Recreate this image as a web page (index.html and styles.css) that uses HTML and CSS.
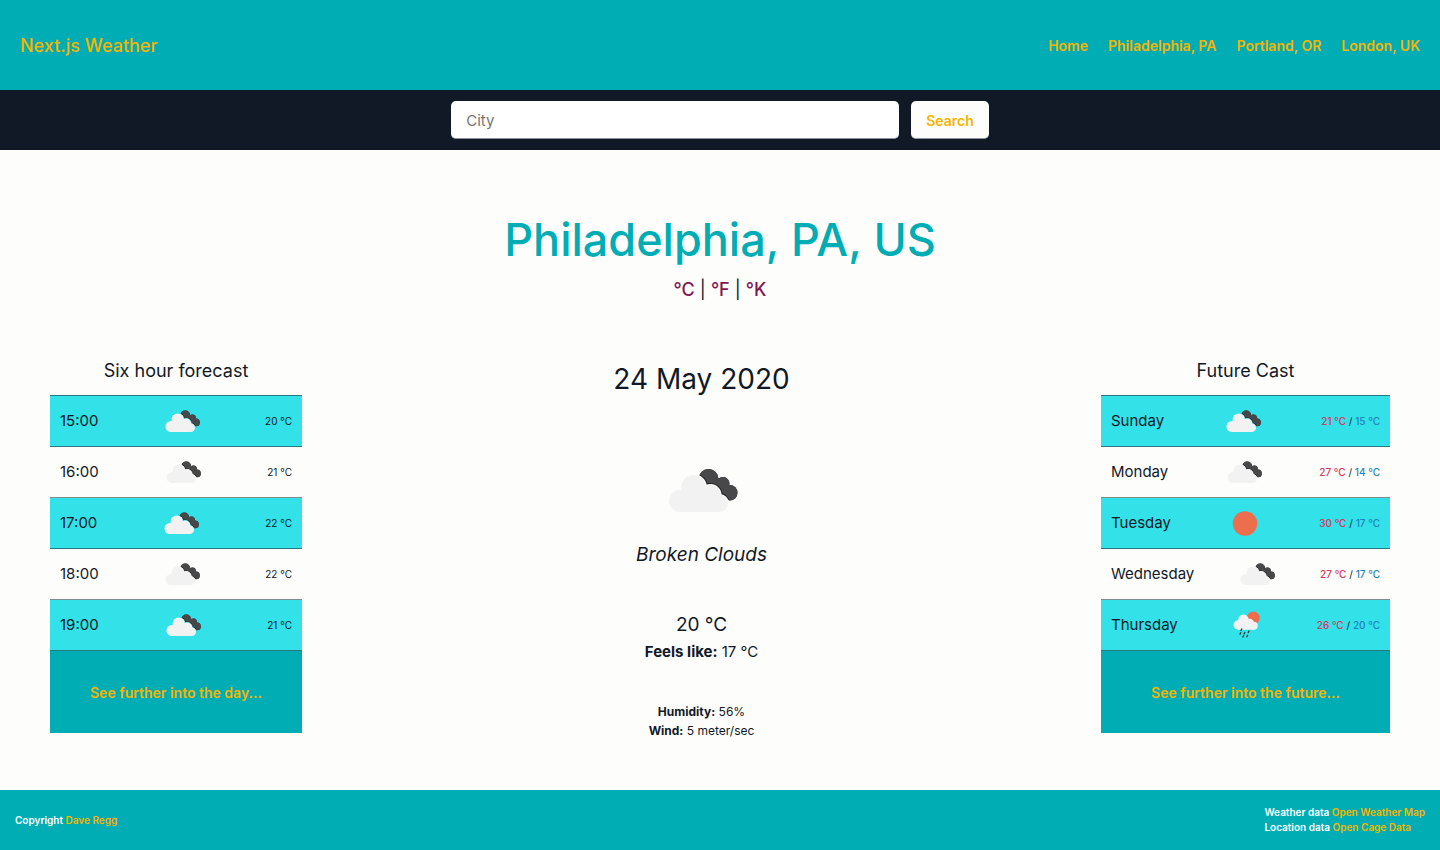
FILE: index.html
```html
<!DOCTYPE html>
<html lang="en">
<head>
<meta charset="utf-8">
<meta name="viewport" content="width=device-width, initial-scale=1">
<title>Next.js Weather</title>
<link rel="stylesheet" href="styles.css">
</head>
<body>
<svg class="sprite" aria-hidden="true">
  <defs>
    <g id="cloud-shape">
      <circle cx="28" cy="61" r="11"/><circle cx="41.5" cy="47.5" r="12.5"/><circle cx="58.5" cy="55" r="10"/><circle cx="67.5" cy="63.5" r="8.5"/><path d="M28 61V72H67.5V60L45 48Z"/>
    </g>
    <g id="back-clouds">
      <circle cx="56.5" cy="39" r="10"/><circle cx="71" cy="43.5" r="6.5"/><circle cx="77.8" cy="52.8" r="7.7"/><path d="M56 40L67 38L78 49L73 59L56 49Z"/>
    </g>
    <mask id="gap" maskUnits="userSpaceOnUse" x="0" y="0" width="100" height="100">
      <rect width="100" height="100" fill="#fff"/><use href="#cloud-shape" fill="#000" stroke="#000" stroke-width="2"/>
    </mask>
    <mask id="shade" maskUnits="userSpaceOnUse" x="0" y="0" width="100" height="100">
      <rect width="100" height="100" fill="#fff"/><use href="#cloud-shape" fill="#000" stroke="#000" stroke-width="4"/>
    </mask>
    <symbol id="broken-clouds" viewBox="0 0 100 100">
      <g mask="url(#gap)"><use href="#back-clouds" fill="#242424"/></g>
      <g mask="url(#shade)"><use href="#back-clouds" fill="#484749"/></g>
      <use href="#cloud-shape" fill="#f2f2f2"/>
    </symbol>
    <symbol id="clear" viewBox="0 0 100 100"><circle cx="50" cy="51" r="24.5" fill="#ec6e4c"/></symbol>
    <symbol id="rain" viewBox="0 0 100 100">
      <circle cx="62.500" cy="36" r="13" fill="#ec6e4c"/>
      <g fill="#f2f2f2"><circle cx="32.5" cy="50" r="9.5"/><circle cx="43" cy="39.5" r="10.5"/><circle cx="55.5" cy="46" r="8.5"/><circle cx="63.5" cy="51.5" r="8"/><path d="M32.5 48V59.5H63.5V47L44 40Z"/></g>
      <path d="M39.5 58l-1.5 3M37.5 65.5l-1.500 3M45.700 65l-1.500 3M54 62l-1.500 3M43.200 71l-1.500 3M51.200 70.500l-1.500 3" stroke="#333" stroke-width="2.600" stroke-linecap="round"/>
    </symbol>
  </defs>
</svg>

<header class="header">
  <a class="logo" href="#">Next.js Weather</a>
  <nav class="nav">
    <a href="#">Home</a>
    <a href="#">Philadelphia, PA</a>
    <a href="#">Portland, OR</a>
    <a href="#">London, UK</a>
  </nav>
</header>

<form class="search">
  <input class="search-input" type="text" placeholder="City" aria-label="City">
  <button class="search-button" type="button">Search</button>
</form>

<main class="main">
  <h1 class="city">Philadelphia, PA, US</h1>
  <p class="units"><a href="#">°C</a> | <a href="#">°F</a> | <a href="#">°K</a></p>

  <div class="columns">
    <section class="panel hourly">
      <h2 class="panel-title">Six hour forecast</h2>
      <ul class="rows">
        <li class="row"><span>15:00</span><svg class="icon"><use href="#broken-clouds"/></svg><span class="temp">20 °C</span></li>
        <li class="row"><span>16:00</span><svg class="icon"><use href="#broken-clouds"/></svg><span class="temp">21 °C</span></li>
        <li class="row"><span>17:00</span><svg class="icon"><use href="#broken-clouds"/></svg><span class="temp">22 °C</span></li>
        <li class="row"><span>18:00</span><svg class="icon"><use href="#broken-clouds"/></svg><span class="temp">22 °C</span></li>
        <li class="row"><span>19:00</span><svg class="icon"><use href="#broken-clouds"/></svg><span class="temp">21 °C</span></li>
      </ul>
      <button class="more" type="button">See further into the day...</button>
    </section>

    <section class="current">
      <h2 class="date">24 May 2020</h2>
      <svg class="icon-large"><use href="#broken-clouds"/></svg>
      <p class="condition">Broken Clouds</p>
      <p class="now">20 °C</p>
      <p class="feels"><strong>Feels like:</strong> 17 °C</p>
      <div class="details">
        <p><strong>Humidity:</strong> 56%</p>
        <p><strong>Wind:</strong> 5 meter/sec</p>
      </div>
    </section>

    <section class="panel daily">
      <h2 class="panel-title">Future Cast</h2>
      <ul class="rows">
        <li class="row"><span>Sunday</span><svg class="icon"><use href="#broken-clouds"/></svg><span class="temp"><span class="high">21 °C</span> / <span class="low">15 °C</span></span></li>
        <li class="row"><span>Monday</span><svg class="icon"><use href="#broken-clouds"/></svg><span class="temp"><span class="high">27 °C</span> / <span class="low">14 °C</span></span></li>
        <li class="row"><span>Tuesday</span><svg class="icon"><use href="#clear"/></svg><span class="temp"><span class="high">30 °C</span> / <span class="low">17 °C</span></span></li>
        <li class="row"><span>Wednesday</span><svg class="icon"><use href="#broken-clouds"/></svg><span class="temp"><span class="high">27 °C</span> / <span class="low">17 °C</span></span></li>
        <li class="row"><span>Thursday</span><svg class="icon"><use href="#rain"/></svg><span class="temp"><span class="high">26 °C</span> / <span class="low">20 °C</span></span></li>
      </ul>
      <button class="more" type="button">See further into the future...</button>
    </section>
  </div>
</main>

<footer class="footer">
  <p>Copyright <a href="#">Dave Regg</a></p>
  <div>
    <p>Weather data <a href="#">Open Weather Map</a></p>
    <p>Location data <a href="#">Open Cage Data</a></p>
  </div>
</footer>
</body>
</html>
```
FILE: styles.css
```css
* {
  box-sizing: border-box;
  margin: 0;
  padding: 0;
}

body {
  display: flex;
  flex-direction: column;
  min-height: 100vh;
  background: #fdfdfb;
  color: #111927;
  font: 15px/20px Inter, "Liberation Sans", sans-serif;
}

a {
  color: #f5b400;
  text-decoration: none;
}

.sprite {
  position: absolute;
  width: 0;
  height: 0;
}

.header {
  display: flex;
  align-items: center;
  justify-content: space-between;
  min-height: 90px;
  padding: 2px 20px 0;
  background: #00adb5;
}

.logo {
  font-size: 18px;
  font-weight: 500;
}

.nav {
  display: flex;
  gap: 20px;
  font-size: 14px;
  font-weight: 600;
}

.search {
  display: flex;
  align-items: center;
  justify-content: center;
  gap: 12px;
  min-height: 60px;
  padding: 11px 20px;
  background: #111927;
}

.search-input,
.search-button {
  height: 38px;
  padding: 2px 15px 0;
  border: 0;
  border-bottom: 1px solid #8b93a1;
  border-radius: 5px;
  font: inherit;
}

.search-input {
  width: 448px;
  background: #fff;
}

.search-input::placeholder {
  color: #757575;
}

.search-button {
  background: #fdfdfb;
  color: #f5b400;
  font-size: 14px;
  font-weight: 600;
}

.main {
  flex: 1;
  padding: 60px 50px 48px;
}

.city {
  color: #00adb5;
  font-size: 45px;
  font-weight: 500;
  line-height: 60px;
  text-align: center;
}

.units {
  padding-top: 8px;
  font-size: 18px;
  line-height: 24px;
  text-align: center;
}

.units a {
  color: #821752;
  font-weight: 500;
}

.columns {
  display: flex;
  align-items: flex-start;
  justify-content: space-between;
  padding-top: 56px;
}

.hourly {
  width: 252px;
}

.daily {
  width: 289px;
}

.panel-title {
  padding: 1px 0 12px;
  font-size: 18px;
  font-weight: 400;
  line-height: 24px;
  text-align: center;
}

.rows {
  border-top: 1px solid #2a7780;
  list-style: none;
}

.row {
  display: flex;
  align-items: center;
  justify-content: space-between;
  padding: 0 10px;
  border-bottom: 1px solid #2a7780;
}

.row:nth-child(even) {
  border-bottom-color: #7f8c8e;
}

.row:nth-child(odd) {
  background: #33e1e8;
}

.icon {
  width: 50px;
  height: 50px;
}

.temp {
  font-size: 10px;
}

.high {
  color: #d7385e;
  font-weight: 500;
}

.low {
  color: #1f83bd;
  font-weight: 500;
}

.more {
  width: 100%;
  padding: 32px 10px 30px;
  border: 0;
  background: #00adb5;
  color: #f5b400;
  font: inherit;
  font-size: 14px;
  font-weight: 600;
}

.current {
  text-align: center;
}

.date {
  font-size: 28px;
  font-weight: 400;
  line-height: 42px;
}

.icon-large {
  display: block;
  width: 100px;
  height: 100px;
  margin: 40px auto 0;
}

.condition {
  font-size: 19px;
  font-style: italic;
  line-height: 30px;
}

.now {
  padding-top: 42px;
  font-size: 19px;
  line-height: 26px;
}

.feels {
  padding-top: 4px;
}

.details {
  padding-top: 40px;
  font-size: 12px;
  line-height: 19px;
}

.footer {
  display: flex;
  align-items: center;
  justify-content: space-between;
  min-height: 60px;
  padding: 0 15px;
  background: #00adb5;
  color: #fdfdfb;
  font-size: 10px;
  font-weight: 600;
  line-height: 15px;
}
```
